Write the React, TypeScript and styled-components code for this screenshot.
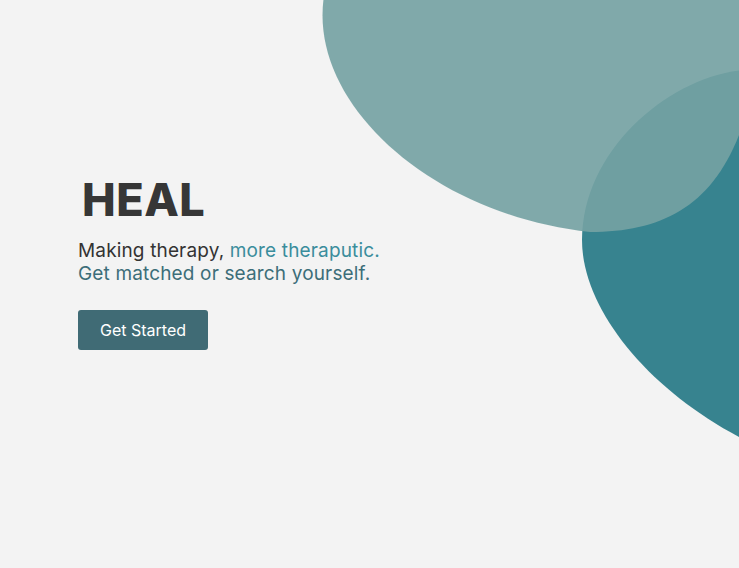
import React from "react";
import styled, { createGlobalStyle } from "styled-components";

const Global = createGlobalStyle`
  html, body { margin: 0; padding: 0; background: #f3f3f3; }
  body { font-family: Inter, "Open Sans", Arial, sans-serif; }
`;

const Page = styled.main`
  position: relative;
  width: 100%;
  height: 568px;
  overflow: hidden;
  background: #f3f3f3;
`;

const Blobs = styled.svg`
  position: absolute;
  top: 0;
  left: 0;
  width: 739px;
  height: 568px;
  pointer-events: none;
`;

const Hero = styled.section`
  position: relative;
  display: flex;
  flex-direction: column;
  align-items: flex-start;
  padding: 174px 0 0 78px;
`;

const Title = styled.h1`
  margin: 0 0 0 4px;
  font-family: Inter, Arial, sans-serif;
  font-weight: 800;
  font-size: 45px;
  line-height: 52px;
  letter-spacing: 0.5px;
  color: #363636;
`;

const Tagline = styled.p`
  margin: 13px 0 0;
  font-size: 19px;
  line-height: 23px;
  letter-spacing: 0.15px;
  color: #333333;
`;

const Accent = styled.span<{ $tone: "light" | "dark" }>`
  color: ${(p) => (p.$tone === "light" ? "#3a8d9c" : "#3c6e79")};
`;

const Cta = styled.button`
  margin-top: 25px;
  width: 130px;
  height: 40px;
  border: none;
  border-radius: 3px;
  background: #406b75;
  color: #ffffff;
  font-family: Inter, Arial, sans-serif;
  font-size: 16px;
  cursor: pointer;
`;

export default function App() {
  return (
    <>
      <Global />
      <Page>
        <Blobs viewBox="0 0 739 568" aria-hidden>
          <path
            d="M 745 70 C 670 76 582 150 582 240 C 582 310 650 392 745 440 Z"
            fill="#37838f"
          />
          <path
            d="M 325 -10 C 303 100 430 215 590 232 C 670 232 725 200 750 100 L 750 -10 Z"
            fill="rgb(117,162,163)"
            fillOpacity={0.91}
          />
        </Blobs>
        <Hero>
          <Title>HEAL</Title>
          <Tagline>
            Making therapy, <Accent $tone="light">more theraputic.</Accent>
            <br />
            <Accent $tone="dark">Get matched or search yourself.</Accent>
          </Tagline>
          <Cta>Get Started</Cta>
        </Hero>
      </Page>
    </>
  );
}
